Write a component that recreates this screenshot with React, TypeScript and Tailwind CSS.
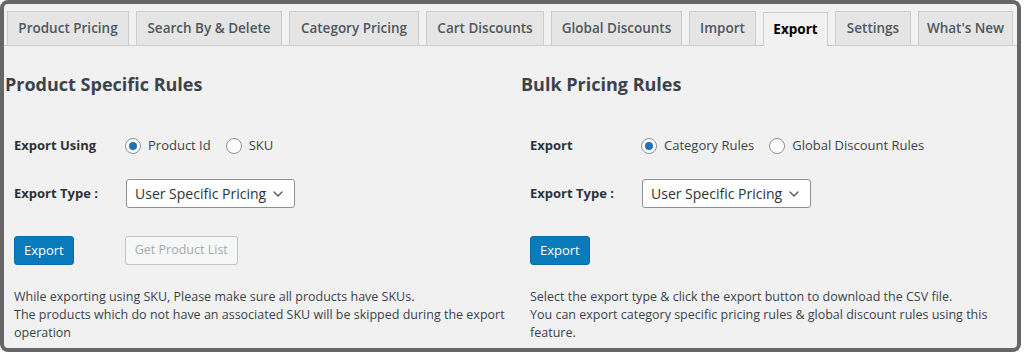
import React from "react";
import { ChevronDown } from "lucide-react";

const tabs = [
  { t: "Product Pricing", w: "w-[122px]" },
  { t: "Search By & Delete", w: "w-[146px]" },
  { t: "Category Pricing", w: "w-[130px]" },
  { t: "Cart Discounts", w: "w-[118px]" },
  { t: "Global Discounts", w: "w-[131px]" },
  { t: "Import", w: "w-[67px]" },
  { t: "Export", w: "w-[65px]" },
  { t: "Settings", w: "w-[76px]" },
  { t: "What's New", w: "w-[95px]" },
];

const Radio = ({ checked, label }: { checked?: boolean; label: string }) => (
  <label className="flex items-center gap-[7px] text-[13px] text-[#3c434a]">
    <span className="w-4 h-4 rounded-full border border-[#8c8f94] bg-white flex items-center justify-center">
      {checked && <span className="w-2 h-2 rounded-full bg-[#2271b1]" />}
    </span>
    {label}
  </label>
);

const Select = () => (
  <div className="w-[169px] h-[29px] bg-white border border-[#8c8f94] rounded-[3px] flex items-center justify-between pl-[8px] pr-[8px] text-[14px] text-[#2c3338]">
    <span>User Specific Pricing</span>
    <ChevronDown className="w-4 h-4 text-[#50575e]" strokeWidth={2} />
  </div>
);

const Section = ({
  title,
  label,
  radios,
  secondary,
  lines,
  className,
}: {
  title: string;
  label: string;
  radios: { label: string; checked?: boolean }[];
  secondary?: string;
  lines: React.ReactNode;
  className?: string;
}) => (
  <div className={className}>
    <h2 className="h-[24px] mt-[26px] text-[18px] leading-[24px] font-bold text-[#3c434a]">
      {title}
    </h2>
    <div className="pl-[9px]">
      <div className="mt-[40px] h-[20px] flex items-center">
        <span className="w-[111px] text-[13px] font-bold text-[#2c3338]">{label}</span>
        <div className="flex items-center gap-[15px]">
          {radios.map((r) => (
            <Radio key={r.label} label={r.label} checked={r.checked} />
          ))}
        </div>
      </div>
      <div className="mt-[23px] h-[29px] flex items-center">
        <span className="w-[112px] text-[13px] font-bold text-[#2c3338]">Export Type :</span>
        <Select />
      </div>
      <div className="mt-[28px] flex items-center gap-[51px]">
        <button className="h-[29px] px-[9px] rounded-[3px] bg-[#0a7bba] text-white text-[13px] border border-[#0a6fa8]">
          Export
        </button>
        {secondary && (
          <button className="h-[29px] px-[9px] rounded-[3px] border border-[#c3c4c7] text-[12.5px] text-[#a7aaad] bg-[#f6f7f7]">
            {secondary}
          </button>
        )}
      </div>
      <p className="mt-[23px] text-[12.5px] leading-[18px] text-[#3c434a]">{lines}</p>
    </div>
  </div>
);

export default function App() {
  return (
    <div className="w-[1024px] h-[352px] bg-white" style={{ fontFamily: '"Open Sans", "Noto Sans", sans-serif' }}>
      <div className="w-[1021px] h-[352px] border-4 border-[#666] rounded-[8px] bg-[#f1f1f1] overflow-hidden">
        <div className="flex items-end gap-[7px] pl-[3px] pt-[7px] border-b border-[#ccc]">
          {tabs.map(({ t, w }) => (
            <div
              key={t}
              className={
                t === "Export"
                  ? `${w} shrink-0 h-[34px] -mb-px flex items-center justify-center whitespace-nowrap border border-[#ccc] border-b-0 bg-[#f1f1f1] text-[13.5px] font-bold text-black`
                  : `${w} shrink-0 h-[34px] flex items-center justify-center whitespace-nowrap border border-[#ccc] border-b-0 bg-[#e5e5e5] text-[13.5px] font-semibold text-[#50575e]`
              }
            >
              {t}
            </div>
          ))}
        </div>
        <div className="flex">
          <Section
            className="w-[516px] pl-[1px]"
            title="Product Specific Rules"
            label="Export Using"
            radios={[{ label: "Product Id", checked: true }, { label: "SKU" }]}
            secondary="Get Product List"
            lines={
              <>
                While exporting using SKU, Please make sure all products have SKUs.
                <br />
                The products which do not have an associated SKU will be skipped during the export operation
              </>
            }
          />
          <Section
            className="flex-1 pl-[1px] pr-[18px]"
            title="Bulk Pricing Rules"
            label="Export"
            radios={[{ label: "Category Rules", checked: true }, { label: "Global Discount Rules" }]}
            lines={
              <>
                Select the export type &amp; click the export button to download the CSV file.
                <br />
                You can export category specific pricing rules &amp; global discount rules using this feature.
              </>
            }
          />
        </div>
      </div>
    </div>
  );
}
